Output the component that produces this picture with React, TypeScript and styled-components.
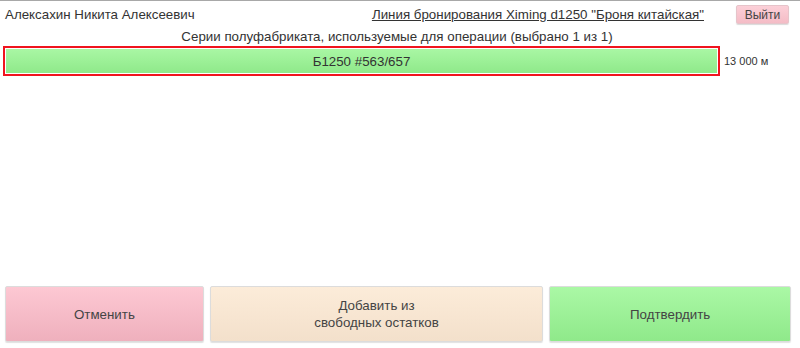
import React from 'react';
import styled, { createGlobalStyle } from 'styled-components';

const GlobalStyle = createGlobalStyle`
  html, body { margin: 0; padding: 0; background: #fff; }
  body { font-family: "Liberation Sans", Arial, sans-serif; color: #333; }
`;

const Page = styled.div`
  height: 348px;
  box-sizing: border-box;
  border-top: 1px solid #a8a8a8;
  display: flex;
  flex-direction: column;
`;

const Header = styled.div`
  display: flex;
  align-items: center;
  height: 27px;
  padding: 0 11px 0 5px;
`;

const UserName = styled.div`
  flex: 1;
  font-size: 13.33px;
  color: #333;
`;

const LineLink = styled.a`
  font-size: 13.33px;
  color: #333;
  text-decoration: underline;
  margin-right: 32px;
  cursor: pointer;
`;

const ExitButton = styled.button`
  width: 53px;
  height: 19px;
  padding: 0;
  font-family: inherit;
  font-size: 12px;
  color: #444;
  border: 1px solid #e6c4ca;
  border-radius: 2px;
  background: linear-gradient(#fcd0d8, #f4bcc6);
  box-shadow: 0 1px 1px rgba(0, 0, 0, 0.15);
`;

const Title = styled.div`
  text-align: center;
  font-size: 13.33px;
  height: 18px;
  line-height: 18px;
  padding-right: 6px;
`;

const SeriesRow = styled.div`
  display: flex;
  align-items: center;
  margin-left: 3px;
`;

const SeriesBar = styled.div`
  width: 717px;
  height: 30px;
  box-sizing: border-box;
  border: 2px solid #f0141e;
  padding: 1px;
  background: #fff;
`;

const SeriesInner = styled.div`
  height: 100%;
  display: flex;
  align-items: center;
  justify-content: center;
  font-size: 13.33px;
  color: #333;
  background: linear-gradient(#a9f7a4, #8fe98a);
`;

const Amount = styled.div`
  margin-left: 4px;
  font-size: 11px;
  color: #333;
`;

const Spacer = styled.div`
  flex: 1;
`;

const Footer = styled.div`
  display: flex;
  gap: 6px;
  padding: 0 9px 6px 5px;
`;

const tones = {
  cancel: ['#fdc8d3', '#efb0bd'],
  add: ['#fcecd9', '#f3e0cb'],
  confirm: ['#aaf8a5', '#8fe98a'],
};

const ActionButton = styled.button<{ $tone: keyof typeof tones; $w: number }>`
  width: ${(p) => p.$w}px;
  height: 56px;
  font-family: inherit;
  font-size: 13.33px;
  line-height: 17px;
  color: #444;
  border: 1px solid #dcdcdc;
  border-radius: 2px;
  background: linear-gradient(${(p) => tones[p.$tone][0]}, ${(p) => tones[p.$tone][1]});
  box-shadow: 0 1px 1px rgba(0, 0, 0, 0.12);
  cursor: pointer;
`;

export default function App() {
  return (
    <>
      <GlobalStyle />
      <Page>
        <Header>
          <UserName>Алексахин Никита Алексеевич</UserName>
          <LineLink>Линия бронирования Ximing d1250 "Броня китайская"</LineLink>
          <ExitButton>Выйти</ExitButton>
        </Header>
        <Title>Серии полуфабриката, используемые для операции (выбрано 1 из 1)</Title>
        <SeriesRow>
          <SeriesBar>
            <SeriesInner>Б1250 #563/657</SeriesInner>
          </SeriesBar>
          <Amount>13 000 м</Amount>
        </SeriesRow>
        <Spacer />
        <Footer>
          <ActionButton $tone="cancel" $w={199}>Отменить</ActionButton>
          <ActionButton $tone="add" $w={334}>
            Добавить из
            <br />
            свободных остатков
          </ActionButton>
          <ActionButton $tone="confirm" $w={242}>Подтвердить</ActionButton>
        </Footer>
      </Page>
    </>
  );
}
